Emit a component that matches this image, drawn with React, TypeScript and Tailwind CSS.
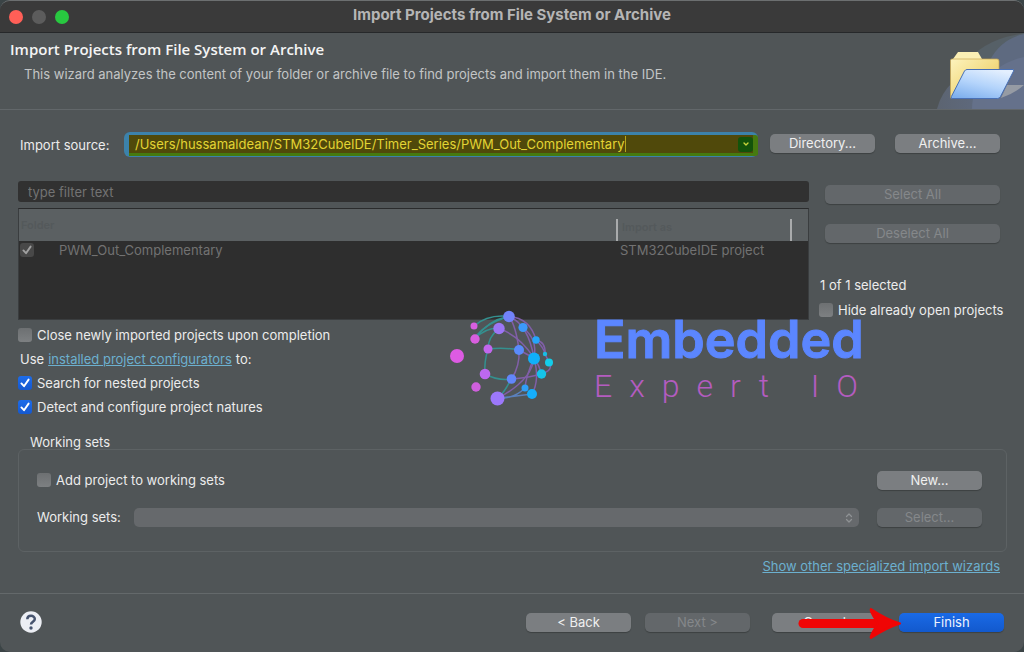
import { useState } from "react";
import type { ReactNode } from "react";
import { ChevronDown, ChevronsUpDown } from "lucide-react";

type PushButtonProps = {
  children: ReactNode;
  className?: string;
  disabled?: boolean;
  primary?: boolean;
};

function PushButton({ children, className = "w-[105px]", disabled, primary }: PushButtonProps) {
  const tone = primary
    ? "bg-linear-to-b from-[#1a6ae6] to-[#1259cd] text-[#eef3fd]"
    : disabled
      ? "bg-[#63676a] text-[#85888a]"
      : "bg-[#7b7e81] text-[#f0f0f0]";
  return (
    <button
      type="button"
      disabled={disabled}
      className={`h-[19px] shrink-0 rounded-[5px] text-center leading-[19px] shadow-[0_1px_1px_rgba(0,0,0,0.25)] ${tone} ${className}`}
    >
      {children}
    </button>
  );
}

function Tick({ className }: { className: string }) {
  return (
    <svg viewBox="0 0 14 14" className={`pointer-events-none absolute inset-0 size-[14px] ${className}`} aria-hidden="true">
      <path d="M3.4 7.4 L6 10.2 L10.6 3.6" fill="none" stroke="currentColor" strokeWidth="1.9" strokeLinecap="round" strokeLinejoin="round" />
    </svg>
  );
}

function CheckOption({ label, initial = false }: { label: string; initial?: boolean }) {
  const [checked, setChecked] = useState(initial);
  return (
    <label className="flex h-6 items-center gap-[5px] whitespace-nowrap">
      <span className="relative block size-[14px] shrink-0">
        <input
          type="checkbox"
          checked={checked}
          onChange={(e) => setChecked(e.target.checked)}
          className="block size-[14px] appearance-none rounded-[3px] bg-linear-to-b from-[#6d7072] to-[#7d8082] checked:from-[#1d6cea] checked:to-[#1558cf]"
        />
        {checked && <Tick className="text-white" />}
      </span>
      <span>{label}</span>
    </label>
  );
}

function FolderBanner() {
  return (
    <svg viewBox="0 0 87 76" className="h-[76px] w-[87px] shrink-0 self-end" aria-hidden="true">
      <defs>
        <linearGradient id="blob" x1="0" y1="0" x2="1" y2="0">
          <stop offset="0" stopColor="#5c6471" />
          <stop offset="1" stopColor="#616f8b" />
        </linearGradient>
        <linearGradient id="folderBack" x1="0" y1="0" x2="1" y2="1">
          <stop offset="0" stopColor="#fdf3bd" />
          <stop offset="0.5" stopColor="#f3dc86" />
          <stop offset="1" stopColor="#e2bf58" />
        </linearGradient>
        <linearGradient id="folderFront" x1="0.2" y1="1" x2="0.7" y2="0">
          <stop offset="0" stopColor="#7fb0ee" />
          <stop offset="0.5" stopColor="#b4d4fb" />
          <stop offset="1" stopColor="#e3effe" />
        </linearGradient>
      </defs>
      <path d="M24 35 Q44 8 78 2 L87 0 V76 H24Z" fill="#566067" />
      <path d="M0 76 Q4 60 16 49 L40 40 L87 30 V76Z" fill="url(#blob)" />
      <path d="M53 27 Q64 6 87 1 V76 H53Z" fill="#5e6a80" />
      <path d="M60 36 Q72 27 87 24 V76 H35 Q35 66 38 60Z" fill="#66738d" opacity="0.8" />
      <path d="M70 52 H87 Q78 60 64 65Z" fill="#969ba4" />
      <path d="M16 26 L21 19 H41 L45 26Z" fill="#fbefb4" />
      <path d="M13.500 65 V27.500 Q13.500 26 15 26 H60 Q62 26 62 28 V55 L58 65Z" fill="url(#folderBack)" stroke="#c8a650" strokeWidth="0.700" />
      <path d="M15 65.500 Q13.500 65.500 14.400 63.500 L27.500 38 Q28.500 36.500 30 36.500 H76 Q77.300 36.500 76.500 38.200 L63.500 63.500 Q62.500 65.500 60.500 65.500Z" fill="url(#folderFront)" stroke="#4970b5" strokeWidth="1" />
    </svg>
  );
}

const nodes: [number, number, number, string][] = [
  [34, 26, 3.5, "#d95fe0"],
  [35, 39, 4.7, "#d95fe0"],
  [17, 56, 7, "#dd5be3"],
  [36, 87, 4.7, "#cf60dd"],
  [48, 49, 4.5, "#c267ee"],
  [45, 74, 5.3, "#bd68f0"],
  [59, 28.500, 5.7, "#9d76f6"],
  [57.500, 98.500, 7, "#9c78fb"],
  [69, 16.500, 5.8, "#7283fa"],
  [79, 50, 5, "#5a8bfb"],
  [71.500, 79, 4.8, "#6286fb"],
  [83, 27.500, 4.6, "#3c99fa"],
  [96, 40, 3.7, "#25a6fb"],
  [94, 58.500, 6, "#10b0fa"],
  [85, 88, 3.5, "#2f9ff9"],
  [92, 94, 5, "#15aefb"],
  [101.500, 74, 4.7, "#14c4ea"],
  [109, 62.500, 4, "#14cdea"],
  [105, 54, 2.2, "#18bde4"],
];

function Watermark() {
  return (
    <div className="pointer-events-none absolute top-[190px] left-[440px] flex items-start">
      <svg viewBox="0 0 130 115" className="h-[115px] w-[130px]" fill="none" strokeWidth="1.5" aria-hidden="true">
        <g stroke="#34908f">
          <path d="M34 26 Q48 14 69 16.500" />
          <path d="M35 39 Q46 22 69 17" />
          <path d="M35 39 Q44 28 59 28" />
          <path d="M34 38 Q50 20 66 17" />
          <path d="M59 28.500 Q48 37 48 49 Q44 62 45 74" />
          <path d="M48 49 Q64 47 79 50" />
          <path d="M45 74 Q58 81 71.500 79" />
          <path d="M57.500 98.500 Q65 92 71 79" />
        </g>
        <g stroke="#805fa8">
          <path d="M69 16.500 Q90 18 96 40" />
          <path d="M69 16.500 Q88 24 94 58" />
          <path d="M69 16.500 Q76 26 79 50" />
          <path d="M59 28.500 Q80 36 94 58" />
          <path d="M83 27.500 Q98 40 94 58" />
          <path d="M79 50 L94 58" />
          <path d="M79 50 Q80 66 71.500 79" />
          <path d="M96 40 Q106 42 105 54 L109 62" />
          <path d="M96 40 Q104 48 105 54" />
          <path d="M109 62.500 Q114 70 101.500 74" />
          <path d="M94 58.500 Q100 66 101 74" />
          <path d="M71.500 79 Q88 78 101 74" />
          <path d="M94 58 Q92 80 57.500 98.500" />
          <path d="M94 58 Q86 76 85 88" />
          <path d="M94 58 Q100 80 92 94" />
        </g>
        <path d="M57.500 98.500 Q74 99 85 88 M57.500 98.500 Q76 96 92 94" stroke="#5a80bc" />
        {nodes.map(([cx, cy, r, fill]) => (
          <circle key={`${cx}-${cy}`} cx={cx} cy={cy} r={r} fill={fill} />
        ))}
      </svg>
      <div className="flex flex-col pt-3 pl-6">
        <span className="font-[Inter,sans-serif] text-[52px] leading-[56px] font-semibold text-[#5b86ff] [-webkit-text-stroke:1px_#5b86ff] [stroke-linejoin:round]">Embedded</span>
        <span className="font-[Roboto,sans-serif] text-[32px] leading-9 font-light tracking-[17px] whitespace-nowrap text-[#b45cc0]">Expert IO</span>
      </div>
    </div>
  );
}

function HelpIcon() {
  return (
    <svg viewBox="0 0 22 22" className="size-[22px]" aria-hidden="true">
      <circle cx="11" cy="11" r="10.700" fill="#eceef4" />
      <path d="M7.300 8.300 C7.300 3.700 14.800 3.800 14.800 8 C14.800 10.700 11 10.800 11 13.600" fill="none" stroke="#46536e" strokeWidth="2.500" />
      <circle cx="11" cy="17" r="1.700" fill="#46536e" />
    </svg>
  );
}

function ImportSourceRow() {
  return (
    <div className="flex items-center pr-1.5">
      <label htmlFor="source" className="w-[106px] shrink-0 pl-0.5">
        Import source:
      </label>
      <div className="flex h-[25px] min-w-0 flex-1 rounded-[6px] bg-[#3c82ab] pt-[3px] pb-px pl-[5px]">
        <div className="flex min-w-0 flex-1 items-center rounded-r-[3px] border-r-[5px] border-b-[3px] border-[#467a10] bg-[#50490b] pl-1.5">
          <input
            id="source"
            type="text"
            defaultValue="/Users/hussamaldean/STM32CubeIDE/Timer_Series/PWM_Out_Complementary"
            className="field-sizing-content min-w-0 bg-transparent leading-[18px] text-[#e3d434] outline-none"
          />
          <span className="h-4 w-px bg-[#b5a51c]" />
          <button type="button" aria-label="Show history" className="ml-auto grid size-[15px] shrink-0 place-items-center rounded-[3px] bg-[#13530b] text-[#c9d43c]">
            <ChevronDown className="size-2" strokeWidth={4} />
          </button>
        </div>
      </div>
      <div className="flex gap-5 pb-0.5 pl-3">
        <PushButton>Directory...</PushButton>
        <PushButton>Archive...</PushButton>
      </div>
    </div>
  );
}

function ProjectTable() {
  return (
    <div className="mt-1.5 h-28 border border-[#3a3d3f] border-t-[#2a2b2c] bg-[#2e2e2e]">
      <table className="w-full table-fixed border-collapse text-left text-[#727272]">
        <colgroup>
          <col />
          <col className="w-[174px]" />
          <col className="w-[18px]" />
        </colgroup>
        <thead>
          <tr className="h-8 bg-[#5b6062] text-[11px] text-[#54595b]">
            <th className="p-0 pl-0.5 font-semibold">Folder</th>
            <th className="p-0 align-bottom">
              <div className="h-[22px] border-l-2 border-[#a9abac] pl-1 leading-4 font-semibold">Import as</div>
            </th>
            <th className="p-0 align-bottom">
              <div className="h-[22px] border-l-2 border-[#a9abac]" />
            </th>
          </tr>
        </thead>
        <tbody>
          <tr>
            <td className="p-0 pl-px">
              <label className="flex h-[18px] items-center">
                <span className="relative block size-[14px] shrink-0">
                  <input type="checkbox" checked disabled readOnly className="block size-[14px] appearance-none rounded-[3px] bg-[#484848]" />
                  <Tick className="text-[#a0a0a0]" />
                </span>
                <span className="pl-[25px]">PWM_Out_Complementary</span>
              </label>
            </td>
            <td className="p-0 pl-1" colSpan={2}>
              STM32CubeIDE project
            </td>
          </tr>
        </tbody>
      </table>
    </div>
  );
}

export default function App() {
  return (
    <div className="min-h-screen bg-[#3b4446] font-[Inter,sans-serif] text-[13px] leading-4 text-[#ececec]">
      <div className="flex min-h-screen flex-col overflow-hidden rounded-[10px] border-t border-[#6c6f70] bg-[#505557]">
        <div className="relative flex h-8 items-center justify-center border-b border-[#26282a] bg-[#3a3a3a]">
          <div className="absolute left-[9px] flex gap-[9px]">
            <button type="button" aria-label="Close" className="size-[14px] rounded-full bg-[#ff5f57]" />
            <button type="button" aria-label="Minimize" disabled className="size-[14px] rounded-full bg-[#5c5c5c]" />
            <button type="button" aria-label="Zoom" className="size-[14px] rounded-full bg-[#28c840]" />
          </div>
          <span className="pb-1 text-[15px] font-bold text-[#b5b5b5]">Import Projects from File System or Archive</span>
        </div>

        <header className="flex h-[77px] justify-between border-b border-[#62676a]">
          <div className="pt-[7px] pl-2.5">
            <h1 className="font-['Open_Sans',sans-serif] text-[15px] leading-[18px] font-semibold text-[#f4f4f4]">
              Import Projects from File System or Archive
            </h1>
            <p className="pt-2 pl-[14px] text-[#c3c5c6]">
              This wizard analyzes the content of your folder or archive file to find projects and import them in the IDE.
            </p>
          </div>
          <FolderBanner />
        </header>

        <main className="relative flex flex-1 flex-col px-[18px] pt-[22px]">
          <ImportSourceRow />

          <div className="mt-6 flex">
            <div className="min-w-0 flex-1">
              <input
                type="text"
                aria-label="Filter"
                placeholder="type filter text"
                className="block h-[21px] w-full rounded-[3px] bg-[#313131] px-2.5 outline-none placeholder:text-[#737373]"
              />
              <ProjectTable />
            </div>
            <div className="-mr-1 flex w-[201px] shrink-0 flex-col pt-1 pl-[10px]">
              <div className="flex flex-col gap-5 pl-1.5">
                <PushButton disabled className="w-[175px]">Select All</PushButton>
                <PushButton disabled className="w-[175px]">Deselect All</PushButton>
              </div>
              <p className="mt-[34px] mb-[5px] pl-px">1 of 1 selected</p>
              <CheckOption label="Hide already open projects" />
            </div>
          </div>

          <div className="mt-px flex flex-col">
            <CheckOption label="Close newly imported projects upon completion" />
            <p className="flex h-6 items-center gap-1 pl-0.5">
              Use
              <a href="#configurators" className="text-[#6cb0cf] underline">installed project configurators</a>
              to:
            </p>
            <CheckOption label="Search for nested projects" initial />
            <CheckOption label="Detect and configure project natures" initial />
          </div>

          <fieldset className="-mr-px mt-4">
            <legend className="block pl-3 leading-[14px]">Working sets</legend>
            <div className="flex flex-col gap-[17px] rounded-[6px] border border-[#5d6264] pt-5 pr-6 pb-6 pl-[18px]">
              <div className="flex h-5 items-center justify-between">
                <CheckOption label="Add project to working sets" />
                <PushButton>New...</PushButton>
              </div>
              <div className="flex h-5 items-center">
                <label htmlFor="sets" className="w-[97px] shrink-0">Working sets:</label>
                <div className="relative min-w-0 flex-1">
                  <select id="sets" disabled className="block h-[19px] w-full appearance-none rounded-[5px] bg-[#66696c] opacity-100">
                    <option></option>
                  </select>
                  <ChevronsUpDown className="pointer-events-none absolute top-1 right-1 size-3 text-[#8f9294]" strokeWidth={2.5} />
                </div>
                <div className="pl-[18px]">
                  <PushButton disabled>Select...</PushButton>
                </div>
              </div>
            </div>
          </fieldset>

          <div className="flex justify-end pt-1.5 pr-1.5 pb-4">
            <a href="#wizards" className="text-[#6cb0cf] underline">Show other specialized import wizards</a>
          </div>

          <Watermark />
        </main>

        <footer className="flex h-[59px] items-center border-t border-[#64696b] pr-5 pb-0.5 pl-5">
          <button type="button" aria-label="Help">
            <HelpIcon />
          </button>
          <div className="ml-auto flex">
            <PushButton>&lt; Back</PushButton>
            <PushButton disabled className="ml-[14px] w-[105px]">Next &gt;</PushButton>
            <div className="relative ml-[22px] flex gap-[22px]">
              <PushButton>Cancel</PushButton>
              <PushButton primary>Finish</PushButton>
              <svg viewBox="0 0 104 32" className="pointer-events-none absolute -top-[6px] left-[26px] h-8 w-[104px]" aria-hidden="true">
                <path d="M5 16.500 H88" stroke="#f00505" strokeWidth="9" strokeLinecap="round" />
                <path d="M73 2 Q88 12 102 16.500 Q88 21 73 31 Q71 30 80 16.500 Q71 3 73 2Z" fill="#f00505" stroke="#f00505" strokeWidth="2" strokeLinejoin="round" />
              </svg>
            </div>
          </div>
        </footer>
      </div>
    </div>
  );
}
